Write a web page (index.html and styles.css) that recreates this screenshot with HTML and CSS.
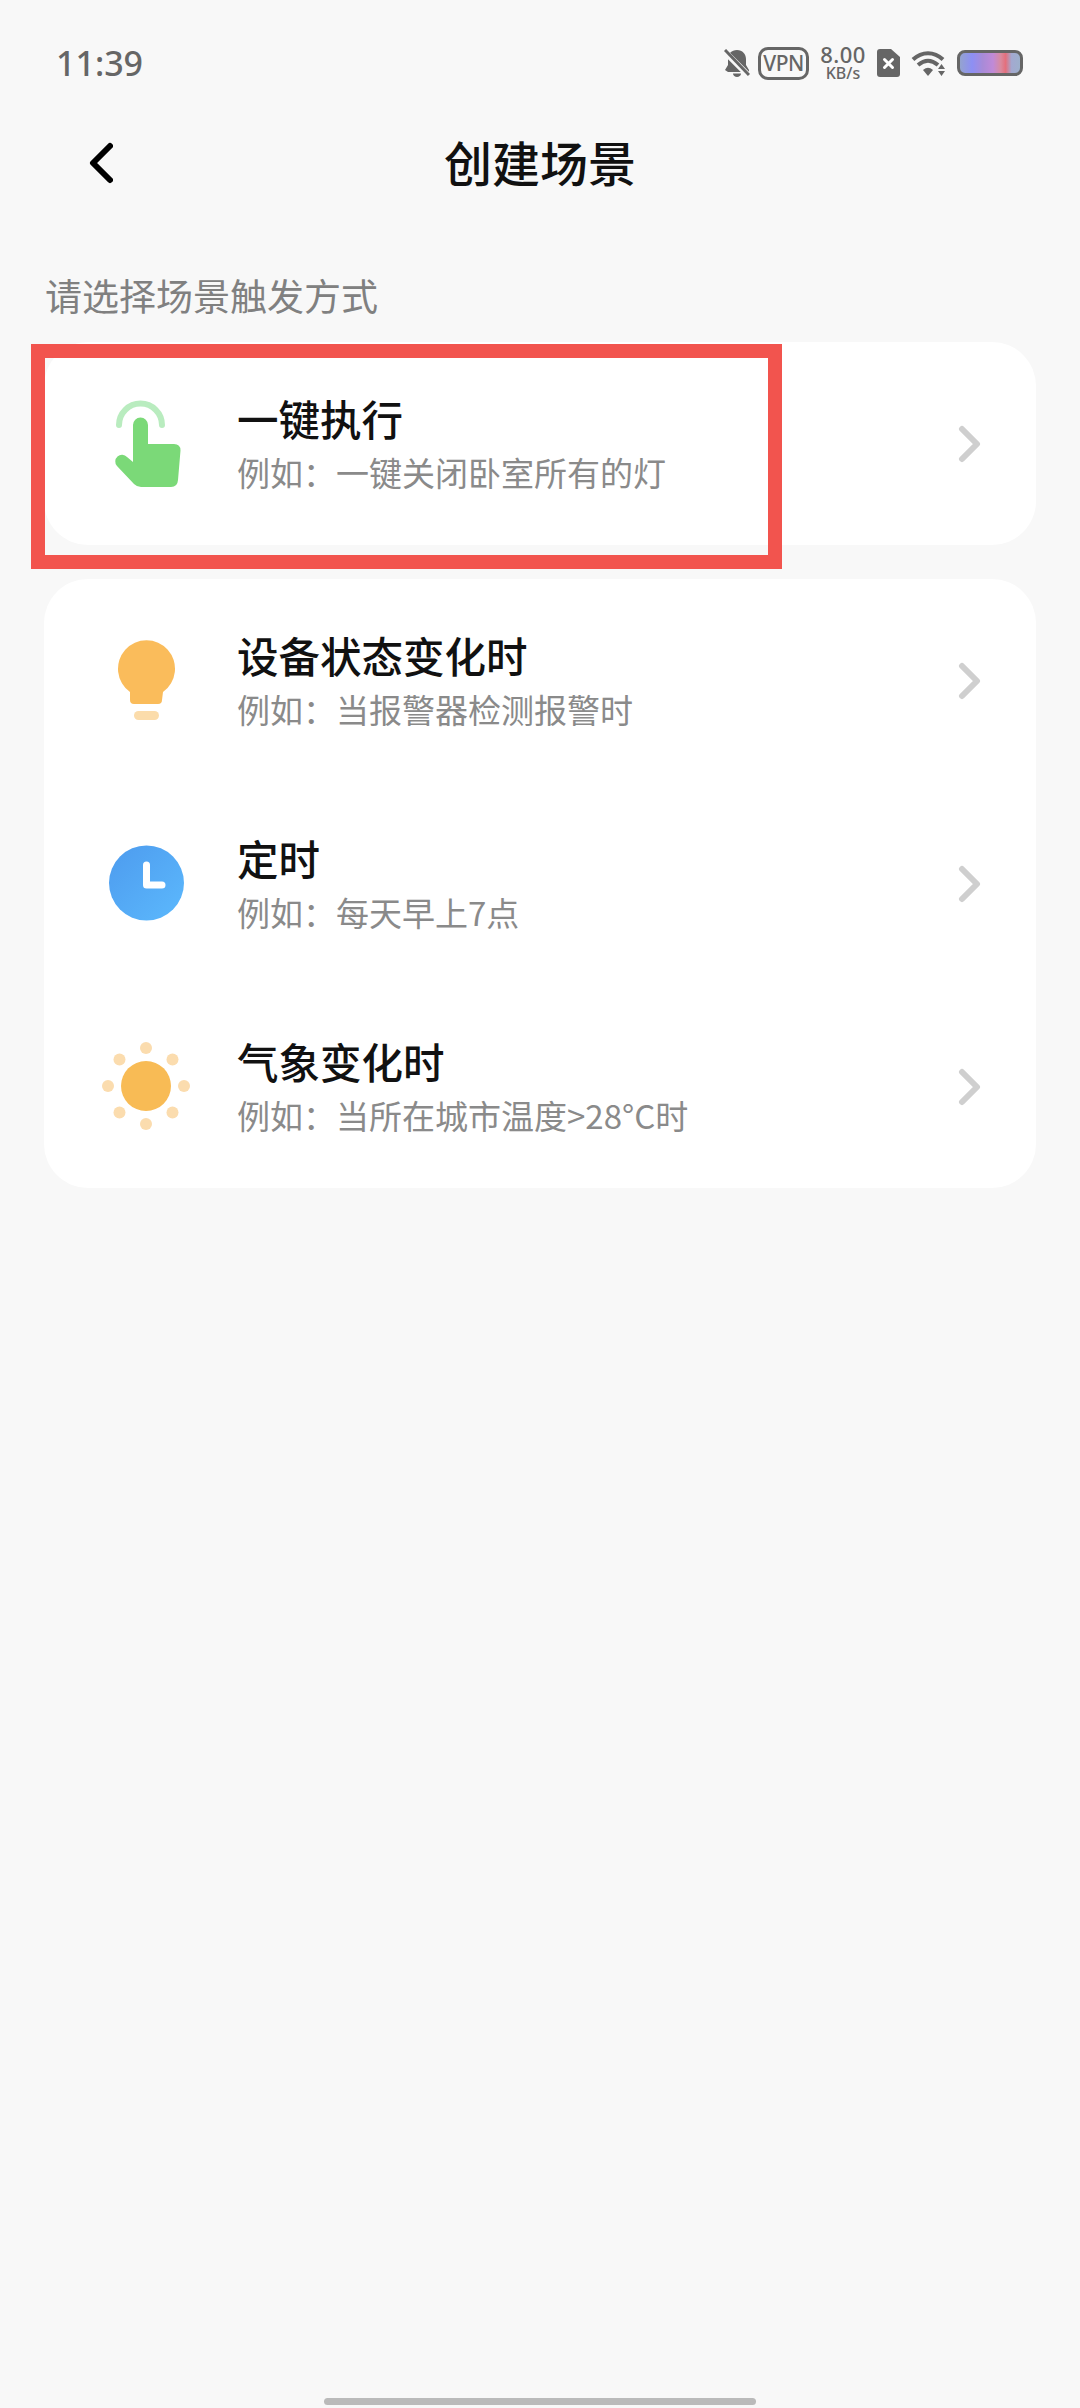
FILE: index.html
```html
<!DOCTYPE html>
<html lang="zh-cn">
<head>
    <meta charset="UTF-8">
    <title>创建场景</title>
    <link rel="stylesheet" href="styles.css">
</head>
<body>
<div class="page">
    <div class="status">
        <span class="time">11:39</span>
        <div class="status-icons">
            <svg class="ic-bell" width="26" height="28" viewBox="0 0 26 28">
                <path d="M13 1c5.500 0 9 4 9 9v6l3 5v2H4L1 21l3-5v-6c0-5.500 3.500-9 9-9z" fill="#666"/>
                <path d="M9 24.500h8c0 2-2 3.500-4 3.500s-4-1.500-4-3.500z" fill="#666"/>
                <path d="M0 2l25 25" stroke="#f8f8f8" stroke-width="6"/>
                <path d="M1 1l24 25" stroke="#666" stroke-width="3"/>
            </svg>
            <span class="vpn">VPN</span>
            <div class="speed">
                <span class="speed-num">8.00</span>
                <span class="speed-unit">KB/s</span>
            </div>
            <svg class="ic-sim" width="23" height="28" viewBox="0 0 23 28">
                <path d="M3 0h11l9 8v17a3 3 0 0 1-3 3H3a3 3 0 0 1-3-3V3a3 3 0 0 1 3-3z" fill="#666"/>
                <path d="M7.500 10.500l8 8M15.500 10.500l-8 8" stroke="#fff" stroke-width="3" stroke-linecap="round"/>
            </svg>
            <svg class="ic-wifi" width="36" height="26" viewBox="0 0 36 26">
                <path d="M2 9.500C11 1 23 1 32 9.500" fill="none" stroke="#666" stroke-width="4"/>
                <path d="M7 15c6.500-5.500 13.500-5.500 20 0" fill="none" stroke="#666" stroke-width="4"/>
                <path d="M12 20c4-3 6-3 10 0l-5 6z" fill="#666"/>
                <path d="M27 19l3.500-5 3.500 5zM27 21h7l-3.500 5z" fill="#666"/>
            </svg>
            <div class="battery"></div>
        </div>
    </div>

    <div class="header">
        <svg class="back" width="26" height="44" viewBox="0 0 26 44">
            <path d="M23 5L6 22l17 17" fill="none" stroke="#000" stroke-width="6" stroke-linecap="round" stroke-linejoin="round"/>
        </svg>
        <h1 class="title">创建场景</h1>
    </div>

    <p class="label">请选择场景触发方式</p>

    <div class="card card-first">
        <div class="row">
            <svg class="icon" width="96" height="96" viewBox="0 0 96 96">
                <path d="M20 29A21.500 21.500 0 0 1 63 29" fill="none" stroke="#b9ecbf" stroke-width="6" stroke-linecap="round"/>
                <path d="M34 29a7.500 7.500 0 0 1 15 0V48H75q6.500 0 6.500 6.500L79 84q-.5 7-7 7H42q-4 0-7-3L18 70a6.500 6.500 0 0 1 10-9l6 5z" fill="#7bd978"/>
            </svg>
            <div class="text">
                <div class="name">一键执行</div>
                <div class="desc">例如：一键关闭卧室所有的灯</div>
            </div>
            <svg class="arrow" width="24" height="38" viewBox="0 0 24 38">
                <path d="M4 4l15 15L4 34" fill="none" stroke="#cfcfcf" stroke-width="6" stroke-linecap="round" stroke-linejoin="round"/>
            </svg>
        </div>
        <div class="mark"></div>
    </div>

    <div class="card">
        <div class="row">
            <svg class="icon" width="96" height="96" viewBox="0 0 96 96">
                <path d="M31 59A28.500 28.500 0 1 1 64 59L63 67q0 4-4 4H35q-4 0-4-4z" fill="#fabc5b"/>
                <rect x="35" y="78" width="25" height="9" rx="4.500" fill="#fbdcab"/>
            </svg>
            <div class="text">
                <div class="name">设备状态变化时</div>
                <div class="desc">例如：当报警器检测报警时</div>
            </div>
            <svg class="arrow" width="24" height="38" viewBox="0 0 24 38">
                <path d="M4 4l15 15L4 34" fill="none" stroke="#cfcfcf" stroke-width="6" stroke-linecap="round" stroke-linejoin="round"/>
            </svg>
        </div>
        <div class="row">
            <svg class="icon" width="96" height="96" viewBox="0 0 96 96">
                <defs>
                    <linearGradient id="clockFill" x1="0" y1="0" x2="1" y2="1">
                        <stop offset="0" stop-color="#4d9bee"/>
                        <stop offset="1" stop-color="#5cb9fd"/>
                    </linearGradient>
                </defs>
                <circle cx="47.500" cy="47" r="37.500" fill="url(#clockFill)"/>
                <path d="M47.500 29V49H63" fill="none" stroke="#fff" stroke-width="7" stroke-linecap="round" stroke-linejoin="round"/>
            </svg>
            <div class="text">
                <div class="name">定时</div>
                <div class="desc">例如：每天早上7点</div>
            </div>
            <svg class="arrow" width="24" height="38" viewBox="0 0 24 38">
                <path d="M4 4l15 15L4 34" fill="none" stroke="#cfcfcf" stroke-width="6" stroke-linecap="round" stroke-linejoin="round"/>
            </svg>
        </div>
        <div class="row">
            <svg class="icon" width="96" height="96" viewBox="0 0 96 96">
                <circle cx="47" cy="47" r="25" fill="#f8bb55"/>
                <g fill="#fbdcae">
                    <circle cx="47" cy="9" r="6"/>
                    <circle cx="47" cy="85" r="6"/>
                    <circle cx="9" cy="47" r="6"/>
                    <circle cx="85" cy="47" r="6"/>
                    <circle cx="20.500" cy="20.500" r="6"/>
                    <circle cx="73.500" cy="20.500" r="6"/>
                    <circle cx="20.500" cy="73.500" r="6"/>
                    <circle cx="73.500" cy="73.500" r="6"/>
                </g>
            </svg>
            <div class="text">
                <div class="name">气象变化时</div>
                <div class="desc">例如：当所在城市温度&gt;28°C时</div>
            </div>
            <svg class="arrow" width="24" height="38" viewBox="0 0 24 38">
                <path d="M4 4l15 15L4 34" fill="none" stroke="#cfcfcf" stroke-width="6" stroke-linecap="round" stroke-linejoin="round"/>
            </svg>
        </div>
    </div>

    <div class="home-bar"></div>
</div>
</body>
</html>
```

FILE: styles.css
```css
* {
    padding: 0;
    margin: 0;
    box-sizing: border-box;
}

html, body {
    width: 1080px;
    height: 2408px;
    overflow: hidden;
    background: #f8f8f8;
}

.page {
    height: 2408px;
    display: flex;
    flex-direction: column;
    font-family: "Noto Sans CJK SC", "Noto Sans", sans-serif;
    color: #111;
}

.status {
    height: 62px;
    margin-top: 32px;
    padding: 0 57px 0 56px;
    display: flex;
    align-items: center;
    justify-content: space-between;
}

.time {
    font-family: "Noto Sans", sans-serif;
    font-size: 34px;
    font-weight: 500;
    line-height: 62px;
    color: #666;
}

.status-icons {
    display: flex;
    align-items: center;
}

.vpn {
    width: 51px;
    height: 33px;
    margin-left: 8px;
    border: 3px solid #666;
    border-radius: 10px;
    font-family: "Noto Sans", sans-serif;
    font-size: 21px;
    font-weight: 500;
    line-height: 27px;
    letter-spacing: -0.5px;
    text-align: center;
    color: #666;
}

.speed {
    width: 46px;
    margin-left: 11px;
    display: flex;
    flex-direction: column;
    align-items: center;
    font-family: "Noto Sans", sans-serif;
    font-weight: 500;
    color: #666;
}

.speed-num {
    font-size: 22px;
    line-height: 21px;
    letter-spacing: 0.5px;
}

.speed-unit {
    font-size: 16px;
    line-height: 17px;
}

.ic-sim {
    margin-left: 11px;
}

.ic-wifi {
    margin-left: 11px;
}

.battery {
    width: 66px;
    height: 26px;
    margin-left: 10px;
    border: 3px solid #666;
    border-radius: 8px;
    background: linear-gradient(90deg, #94a3cf 0%, #8d8ff4 20%, #a88bd8 38%, #c08ad8 55%, #d98a9e 68%, #e46f7c 76%, #a3a9d0 86%, #9db0cc 100%);
}

.header {
    height: 70px;
    margin-top: 32px;
    position: relative;
    display: flex;
    align-items: center;
    justify-content: center;
}

.back {
    position: absolute;
    left: 87px;
    top: 15px;
}

.title {
    font-size: 48px;
    font-weight: 500;
    line-height: 70px;
    color: #111;
}

.label {
    margin: 74px 0 0 45px;
    font-size: 37px;
    line-height: 50px;
    color: #808080;
}

.card {
    width: 992px;
    margin: 20px 0 0 44px;
    background: #fff;
    border-radius: 44px;
    position: relative;
}

.card-first {
    margin-top: 22px;
}

.card-first + .card {
    margin-top: 34px;
}

.row {
    height: 203px;
    padding: 0 55px 0 55px;
    display: flex;
    align-items: center;
}

.icon {
    flex: none;
}

.text {
    flex: 1;
    margin-left: 42px;
    padding-bottom: 2px;
}

.name {
    font-size: 41.500px;
    font-weight: 500;
    line-height: 56px;
    color: #111;
}

.desc {
    margin-top: 3px;
    font-size: 33px;
    line-height: 46px;
    color: #8a8a8a;
}

.arrow {
    flex: none;
    margin-right: -1px;
}

/* 红色标注框 */
.mark {
    position: absolute;
    left: -13px;
    top: 2px;
    width: 751px;
    height: 225px;
    border: 14px solid #f2544e;
}

.home-bar {
    position: absolute;
    left: 324px;
    top: 2398px;
    width: 432px;
    height: 7px;
    border-radius: 4px;
    background: #bababa;
}
```
